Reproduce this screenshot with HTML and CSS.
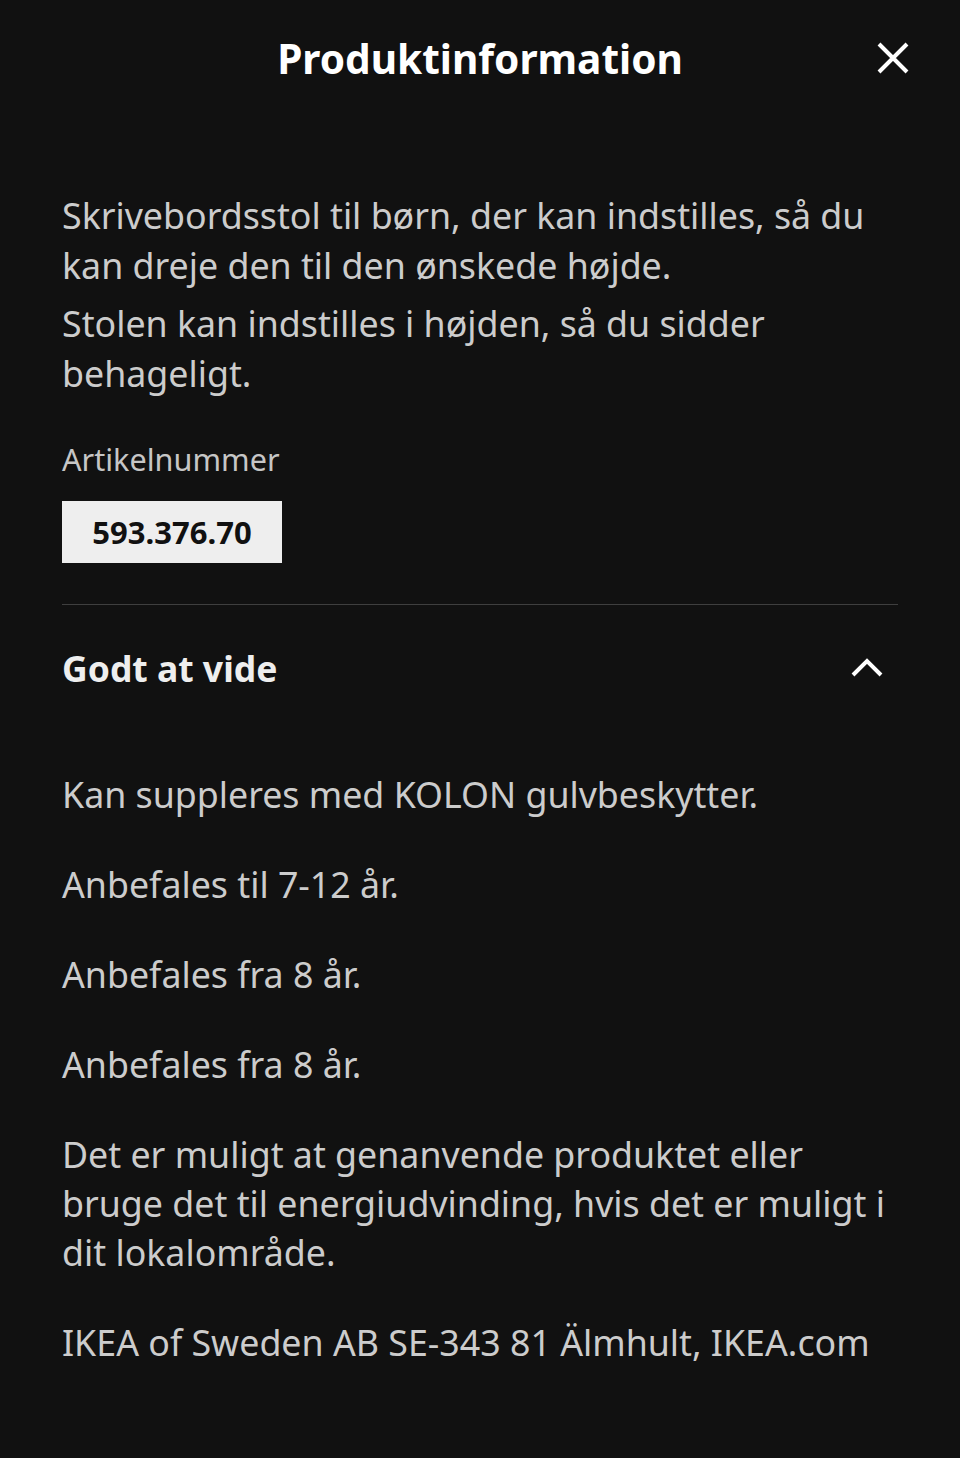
FILE: index.html
```html
<!DOCTYPE html>
<html lang="da">
<head>
<meta charset="utf-8">
<title>Produktinformation</title>
<link rel="stylesheet" href="styles.css">
</head>
<body>
<div class="sheet">
  <header class="header">
    <span class="spacer"></span>
    <h1 class="title">Produktinformation</h1>
    <button class="close" aria-label="Luk">
      <svg width="34" height="34" viewBox="0 0 34 34"><path d="M3 3 L31 31 M31 3 L3 31" stroke="#fff" stroke-width="4" stroke-linecap="butt" fill="none"/></svg>
    </button>
  </header>
  <main class="content">
    <p class="desc">Skrivebordsstol til børn, der kan indstilles, så du kan dreje den til den ønskede højde.</p>
    <p class="desc second">Stolen kan indstilles i højden, så du sidder behageligt.</p>
    <div class="label">Artikelnummer</div>
    <div class="artnr">593.376.70</div>
    <hr class="divider">
    <div class="section-head">
      <h2 class="section-title">Godt at vide</h2>
      <svg class="chevron" width="34" height="20" viewBox="0 0 34 20"><path d="M3 17 L17 3 L31 17" stroke="#fff" stroke-width="4" fill="none"/></svg>
    </div>
    <div class="facts">
      <p>Kan suppleres med KOLON gulvbeskytter.</p>
      <p>Anbefales til 7-12 år.</p>
      <p>Anbefales fra 8 år.</p>
      <p>Anbefales fra 8 år.</p>
      <p>Det er muligt at genanvende produktet eller bruge det til energiudvinding, hvis det er muligt i dit lokalområde.</p>
      <p>IKEA of Sweden AB SE-343 81 Älmhult, IKEA.com</p>
    </div>
  </main>
</div>
</body>
</html>
```

FILE: styles.css
```css
html, body {
  margin: 0;
  padding: 0;
  background: #111111;
}
body {
  font-family: "Noto Sans", "Open Sans", sans-serif;
  color: #cccccc;
}
.sheet {
  width: 960px;
  min-height: 1458px;
}
.header {
  height: 116px;
  display: grid;
  grid-template-columns: 1fr auto 1fr;
  align-items: center;
}
.title {
  margin: 0;
  font-size: 40.6px;
  font-weight: 700;
  color: #ffffff;
}
.close {
  justify-self: end;
  margin-right: 50px;
  background: none;
  border: 0;
  padding: 0;
  width: 34px;
  height: 34px;
  display: flex;
  cursor: pointer;
}
.content {
  padding: 75px 62px 0;
}
.desc {
  margin: 0;
  font-size: 35.75px;
  line-height: 49.5px;
}
.desc.second {
  margin-top: 9px;
}
.label {
  margin-top: 41px;
  font-size: 30.6px;
  line-height: 40px;
  color: #c6c6c6;
}
.artnr {
  margin-top: 22px;
  display: inline-flex;
  align-items: center;
  justify-content: center;
  width: 220px;
  height: 62px;
  background: #eeeeee;
  color: #111111;
  font-size: 31px;
  font-weight: 700;
}
.divider {
  margin: 41px 0 0;
  border: 0;
  border-top: 1px solid #3f3f3f;
}
.section-head {
  height: 125px;
  display: flex;
  align-items: center;
  justify-content: space-between;
}
.section-title {
  margin: 0;
  font-size: 35.5px;
  font-weight: 700;
  color: #eeeeee;
}
.chevron {
  margin-right: 14px;
}
.facts {
  display: flex;
  flex-direction: column;
  gap: 41px;
  margin-top: 40px;
}
.facts p {
  margin: 0;
  font-size: 35.75px;
  line-height: 49px;
}
```
